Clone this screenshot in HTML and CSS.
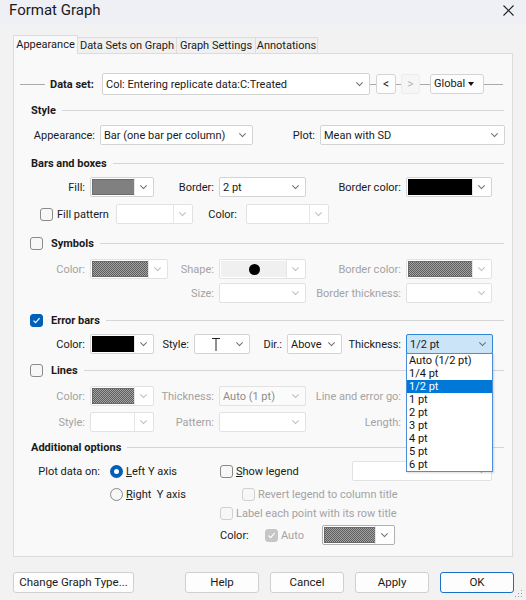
FILE: index.html
```html
<!DOCTYPE html>
<html lang="en">
<head>
<meta charset="utf-8">
<title>Format Graph</title>
<link rel="stylesheet" href="styles.css">
</head>
<body>
<div class="window">
  <header class="titlebar">
    <span class="title">Format Graph</span>
    <svg class="close" width="11" height="11" viewBox="0 0 11 11"><path d="M0.5 0.5L10.5 10.5M10.5 0.5L0.5 10.5" stroke="#1f1f1f" stroke-width="1.1" fill="none"/></svg>
  </header>

  <div class="dialog">
    <nav class="tabs">
      <span class="tab active w65">Appearance</span>
      <span class="tab w100">Data Sets on Graph</span>
      <span class="tab w80">Graph Settings</span>
      <span class="tab w63">Annotations</span>
    </nav>

    <section class="panel">
      <!-- data set selector -->
      <div class="row row-data">
        <span class="rule w25 ml6"></span>
        <span class="dlabel w57">Data set:</span>
        <span class="combo tall w268">Col: Entering replicate data:C:Treated</span>
        <span class="rule w6"></span>
        <span class="mini w20">&lt;</span>
        <span class="rule w5"></span>
        <span class="mini off w19">&gt;</span>
        <span class="rule w10"></span>
        <span class="mini global w54">Global<i class="tri"></i></span>
        <span class="rule w19"></span>
      </div>

      <!-- Style -->
      <div class="row sect mt5"><span class="sect-title">Style</span><span class="sect-rule"></span></div>
      <div class="row mt5">
        <span class="lbl w86">Appearance:</span>
        <span class="combo w153">Bar (one bar per column)</span>
        <span class="lbl w67">Plot:</span>
        <span class="combo w185">Mean with SD</span>
      </div>

      <!-- Bars and boxes -->
      <div class="row sect mt8"><span class="sect-title">Bars and boxes</span><span class="sect-rule"></span></div>
      <div class="row mt4">
        <span class="lbl w76">Fill:</span>
        <span class="combo color w64"><span class="swatch gray"></span></span>
        <span class="lbl w65">Border:</span>
        <span class="combo w87">2 pt</span>
        <span class="lbl w100">Border color:</span>
        <span class="combo color w86"><span class="swatch black"></span></span>
      </div>
      <div class="row mt7">
        <span class="opt w76 ml26"><span class="box"></span>Fill pattern</span>
        <span class="combo color off w77"></span>
        <span class="lbl w53 pr9">Color:</span>
        <span class="combo color off w83"></span>
      </div>

      <!-- Symbols -->
      <div class="row sect sect-chk mt9"><span class="box"></span><span class="sect-title">Symbols</span><span class="sect-rule"></span></div>
      <div class="row mt6">
        <span class="lbl dis w76">Color:</span>
        <span class="combo color off w78"><span class="swatch checker"></span></span>
        <span class="lbl dis w51">Shape:</span>
        <span class="combo color off w87"><span class="swatch shape"><span class="dot"></span></span></span>
        <span class="lbl dis w100">Border color:</span>
        <span class="combo color off w86"><span class="swatch checker"></span></span>
      </div>
      <div class="row mt4">
        <span class="lbl dis w205">Size:</span>
        <span class="combo off w87"></span>
        <span class="lbl dis w100">Border thickness:</span>
        <span class="combo off w86"></span>
      </div>

      <!-- Error bars -->
      <div class="row sect sect-chk mt7"><span class="box on"><svg width="9" height="9" viewBox="0 0 9 9"><path d="M1.5 4.6L3.6 6.6L7.6 2.2" stroke="#fff" stroke-width="1.2" fill="none"/></svg></span><span class="sect-title">Error bars</span><span class="sect-rule"></span></div>
      <div class="row mt4">
        <span class="lbl w76">Color:</span>
        <span class="combo color w64"><span class="swatch black"></span></span>
        <span class="lbl w40">Style:</span>
        <span class="combo w56"><svg class="cap" width="10" height="15" viewBox="0 0 10 15"><path d="M1 1.5H9M5 1.5V14" stroke="#222" stroke-width="1" fill="none"/></svg></span>
        <span class="lbl w37">Dir.:</span>
        <span class="combo w55">Above</span>
        <span class="lbl w64">Thickness:</span>
        <span class="combo focus w87">1/2 pt
          <ul class="list">
            <li>Auto (1/2 pt)</li>
            <li>1/4 pt</li>
            <li class="sel">1/2 pt</li>
            <li>1 pt</li>
            <li>2 pt</li>
            <li>3 pt</li>
            <li>4 pt</li>
            <li>5 pt</li>
            <li>6 pt</li>
          </ul>
        </span>
      </div>

      <!-- Lines -->
      <div class="row sect sect-chk mt6"><span class="box"></span><span class="sect-title">Lines</span><span class="sect-rule"></span></div>
      <div class="row mt6">
        <span class="lbl dis w76">Color:</span>
        <span class="combo color off w64"><span class="swatch checker"></span></span>
        <span class="lbl dis w65">Thickness:</span>
        <span class="combo off w87 dimtext">Auto (1 pt)</span>
        <span class="lbl dis w100">Line and error go:</span>
        <span class="combo off w86"></span>
      </div>
      <div class="row mt6">
        <span class="lbl dis w76">Style:</span>
        <span class="combo color off w64"></span>
        <span class="lbl dis w65">Pattern:</span>
        <span class="combo off w87"></span>
        <span class="lbl dis w100">Length:</span>
        <span class="combo off w86"></span>
      </div>

      <!-- Additional options -->
      <div class="row sect mt5"><span class="sect-title">Additional options</span><span class="sect-rule"></span></div>
      <div class="row mt4">
        <span class="lbl w96 pr10">Plot data on:</span>
        <span class="opt w110"><span class="radio on"></span><span><u>L</u>eft Y axis</span></span>
        <span class="opt w132"><span class="box"></span><span><u>S</u>how legend</span></span>
        <span class="combo off w140"></span>
      </div>
      <div class="row mt3">
        <span class="w96"></span>
        <span class="opt w132"><span class="radio"></span><span><u>R</u>ight&nbsp; Y axis</span></span>
        <span class="opt dis"><span class="box off"></span>Revert legend to column title</span>
      </div>
      <div class="row short">
        <span class="w206"></span>
        <span class="opt dis"><span class="box off"></span>Label each point with its row title</span>
      </div>
      <div class="row mt3">
        <span class="w206"></span>
        <span class="w45">Color:</span>
        <span class="opt dis w57"><span class="box on off"><svg width="9" height="9" viewBox="0 0 9 9"><path d="M1.5 4.6L3.6 6.6L7.6 2.2" stroke="#fff" stroke-width="1.2" fill="none"/></svg></span>Auto</span>
        <span class="combo color framed w73"><span class="swatch checker"></span></span>
      </div>
    </section>

    <footer class="buttons">
      <span class="btn w121">Change Graph Type...</span>
      <span class="btn w74 push">Help</span>
      <span class="btn w74">Cancel</span>
      <span class="btn w74">Apply</span>
      <span class="btn w74 default">OK</span>
    </footer>
  </div>

  <svg class="grip" width="8" height="8" viewBox="0 0 8 8">
    <rect x="6" y="0" width="1" height="1" fill="#9a9a9a"/>
    <rect x="3" y="3" width="1" height="1" fill="#9a9a9a"/>
    <rect x="6" y="3" width="1" height="1" fill="#9a9a9a"/>
    <rect x="0" y="6" width="1" height="1" fill="#9a9a9a"/>
    <rect x="3" y="6" width="1" height="1" fill="#9a9a9a"/>
    <rect x="6" y="6" width="1" height="1" fill="#9a9a9a"/>
  </svg>
</div>
</body>
</html>
```

FILE: styles.css
```css
* { box-sizing: border-box; }

body {
  margin: 0;
  font-family: Roboto, "Noto Sans", sans-serif;
  font-size: 11px;
  color: #1a1a1a;
  background: #f2f2f2;
}

.window {
  position: relative;
  width: 526px;
  height: 600px;
  overflow: hidden;
  background: #f2f2f2;
}

/* title bar */
.titlebar {
  height: 24px;
  background: #eef0f6;
  display: flex;
  align-items: center;
  justify-content: space-between;
  padding: 0 12px 4px 9px;
}
.title { font-size: 15px; color: #1b1b1b; }

.dialog { padding: 11px 12px 0 13px; }

/* tabs */
.tabs {
  display: flex;
  align-items: flex-end;
  height: 18px;
  position: relative;
  z-index: 1;
}
.tab {
  height: 16px;
  line-height: 15px;
  text-align: center;
  background: #f0f0f0;
  border: 1px solid #dcdcdc;
  border-bottom: none;
  margin-right: -1px;
  white-space: nowrap;
}
.tab.active {
  height: 19px;
  line-height: 18px;
  margin-bottom: -1px;
  background: #f9f9f9;
}

/* tab page */
.panel {
  width: 500px;
  height: 504px;
  border: 1px solid #dcdcdc;
  background: #f9f9f9;
  padding-top: 19px;
}

.row {
  display: flex;
  align-items: center;
  height: 20px;
  white-space: nowrap;
}
.row.short { height: 18px; }
.row-data { height: 22px; }

.mt3 { margin-top: 3px; }
.mt4 { margin-top: 4px; }
.mt5 { margin-top: 5px; }
.mt6 { margin-top: 6px; }
.mt7 { margin-top: 7px; }
.mt8 { margin-top: 8px; }
.mt9 { margin-top: 9px; }
.ml6 { margin-left: 6px; }
.ml26 { margin-left: 26px; }

.w5 { width: 5px; flex: none; }
.w6 { width: 6px; flex: none; }
.w10 { width: 10px; flex: none; }
.w19 { width: 19px; flex: none; }
.w20 { width: 20px; flex: none; }
.w25 { width: 25px; flex: none; }
.w37 { width: 37px; flex: none; }
.w40 { width: 40px; flex: none; }
.w45 { width: 45px; flex: none; }
.w51 { width: 51px; flex: none; }
.w53 { width: 53px; flex: none; }
.w54 { width: 54px; flex: none; }
.w55 { width: 55px; flex: none; }
.w56 { width: 56px; flex: none; }
.w57 { width: 57px; flex: none; }
.w63 { width: 63px; flex: none; }
.w64 { width: 64px; flex: none; }
.w65 { width: 65px; flex: none; }
.w67 { width: 67px; flex: none; }
.w73 { width: 73px; flex: none; }
.w74 { width: 74px; flex: none; }
.w76 { width: 76px; flex: none; }
.w77 { width: 77px; flex: none; }
.w78 { width: 78px; flex: none; }
.w80 { width: 80px; flex: none; }
.w83 { width: 83px; flex: none; }
.w86 { width: 86px; flex: none; }
.w87 { width: 87px; flex: none; }
.w96 { width: 96px; flex: none; }
.w100 { width: 100px; flex: none; }
.w110 { width: 110px; flex: none; }
.w121 { width: 121px; flex: none; }
.w132 { width: 132px; flex: none; }
.w140 { width: 140px; flex: none; }
.w153 { width: 153px; flex: none; }
.w185 { width: 185px; flex: none; }
.w205 { width: 205px; flex: none; }
.w206 { width: 206px; flex: none; }
.w268 { width: 268px; flex: none; }

/* data set row */
.rule { height: 1px; background: #ababab; }
.dlabel { font-weight: 700; padding-left: 5px; }
.mini {
  height: 20px;
  line-height: 18px;
  text-align: center;
  background: #fdfdfd;
  border: 1px solid #d4d4d4;
  border-radius: 3px;
  font-size: 12px;
}
.mini.off { background: #f6f6f6; border-color: #ececec; color: #b8b8b8; }
.mini.global {
  font-size: 11px;
  text-align: left;
  padding-left: 3px;
  position: relative;
}
.tri {
  position: absolute;
  right: 9px;
  top: 7px;
  border-left: 3px solid transparent;
  border-right: 3px solid transparent;
  border-top: 4px solid #111;
}

/* section headings */
.sect { padding-left: 17px; }
.sect-chk { padding-left: 16px; }
.sect-chk .box { margin-right: 8px; }
.sect-title { font-weight: 700; }
.sect-rule {
  flex: 1;
  height: 1px;
  background: #d6d6d6;
  margin: 0 8px 0 6px;
}

/* labels */
.lbl { text-align: right; padding-right: 5px; }
.pr9 { padding-right: 9px; }
.pr10 { padding-right: 10px; }
.dis { color: #a3a3a3; }

/* combo boxes */
.combo {
  position: relative;
  height: 20px;
  display: flex;
  align-items: center;
  padding: 0 18px 0 3px;
  background: #fff;
  border: 1px solid #d3d3d3;
  border-radius: 2px;
  overflow: visible;
}
.combo.tall { height: 22px; }
.combo::after {
  content: "";
  position: absolute;
  right: 7px;
  top: 50%;
  width: 4px;
  height: 4px;
  border-right: 1px solid #6f6f6f;
  border-bottom: 1px solid #6f6f6f;
  transform: translateY(-75%) rotate(45deg);
}
.combo.off { border-color: #e2e2e2; }
.combo.off::after { border-color: #bdbdbd; }
.combo.dimtext { color: #8c8c8c; background: #fbfbfb; }
.combo.color { padding: 1px 18px 1px 1px; }
.combo.color::before {
  content: "";
  position: absolute;
  right: 18px;
  top: 0;
  bottom: 0;
  width: 1px;
  background: #e6e6e6;
}
.combo.framed { border-color: #b0b0b0; }
.combo.focus {
  background: #cce4f7;
  border-color: #2f86d6;
}

.swatch { flex: 1; align-self: stretch; }
.swatch.gray { background: #808080; border: 1px solid #6c6c6c; }
.swatch.black { background: #000; }
.swatch.checker {
  background: repeating-conic-gradient(#5e5e5e 0 25%, #a2a2a2 0 50%) 0 0 / 2px 2px;
  border: 1px solid #6a6a6a;
}
.swatch.shape {
  background: #f0f0f0;
  display: flex;
  align-items: center;
  justify-content: center;
}
.dot {
  width: 11px;
  height: 11px;
  border-radius: 50%;
  background: #000;
}
.cap { margin-left: 13px; }

/* open thickness list */
.list {
  position: absolute;
  left: -1px;
  top: 100%;
  width: 87px;
  margin: 0;
  padding: 0;
  list-style: none;
  background: #fff;
  border: 1px solid #4a8fd8;
  box-shadow: 1px 1px 2px rgba(0, 0, 0, 0.15);
  z-index: 5;
}
.list li {
  height: 13px;
  line-height: 13px;
  padding-left: 2px;
  color: #111;
}
.list li.sel { background: #0078d7; color: #fff; }

/* check boxes and radios */
.opt {
  display: flex;
  align-items: center;
  gap: 3px;
}
.opt.w76 { gap: 4px; }
.box {
  width: 13px;
  height: 13px;
  flex: none;
  border: 1px solid #8a8a8a;
  border-radius: 3px;
  background: #f7f7f7;
  display: flex;
  align-items: center;
  justify-content: center;
}
.box.off { border-color: #d0d0d0; }
.box.on { background: #005fb8; border-color: #005fb8; }
.box.on.off { background: #c6c6c6; border-color: #c6c6c6; }
.radio {
  width: 13px;
  height: 13px;
  flex: none;
  border: 1px solid #8a8a8a;
  border-radius: 50%;
  background: #f7f7f7;
}
.radio.on {
  border: 4px solid #005fb8;
  background: #fff;
}

/* dialog buttons */
.buttons {
  display: flex;
  gap: 11px;
  margin-top: 15px;
}
.btn {
  height: 21px;
  line-height: 19px;
  text-align: center;
  font-size: 11.5px;
  background: #fdfdfd;
  border: 1px solid #d0d0d0;
  border-radius: 3px;
}
.btn.push { margin-left: auto; }
.btn.default { border-color: #1a6fc7; }

.grip {
  position: absolute;
  right: 3px;
  bottom: 2px;
}
```
